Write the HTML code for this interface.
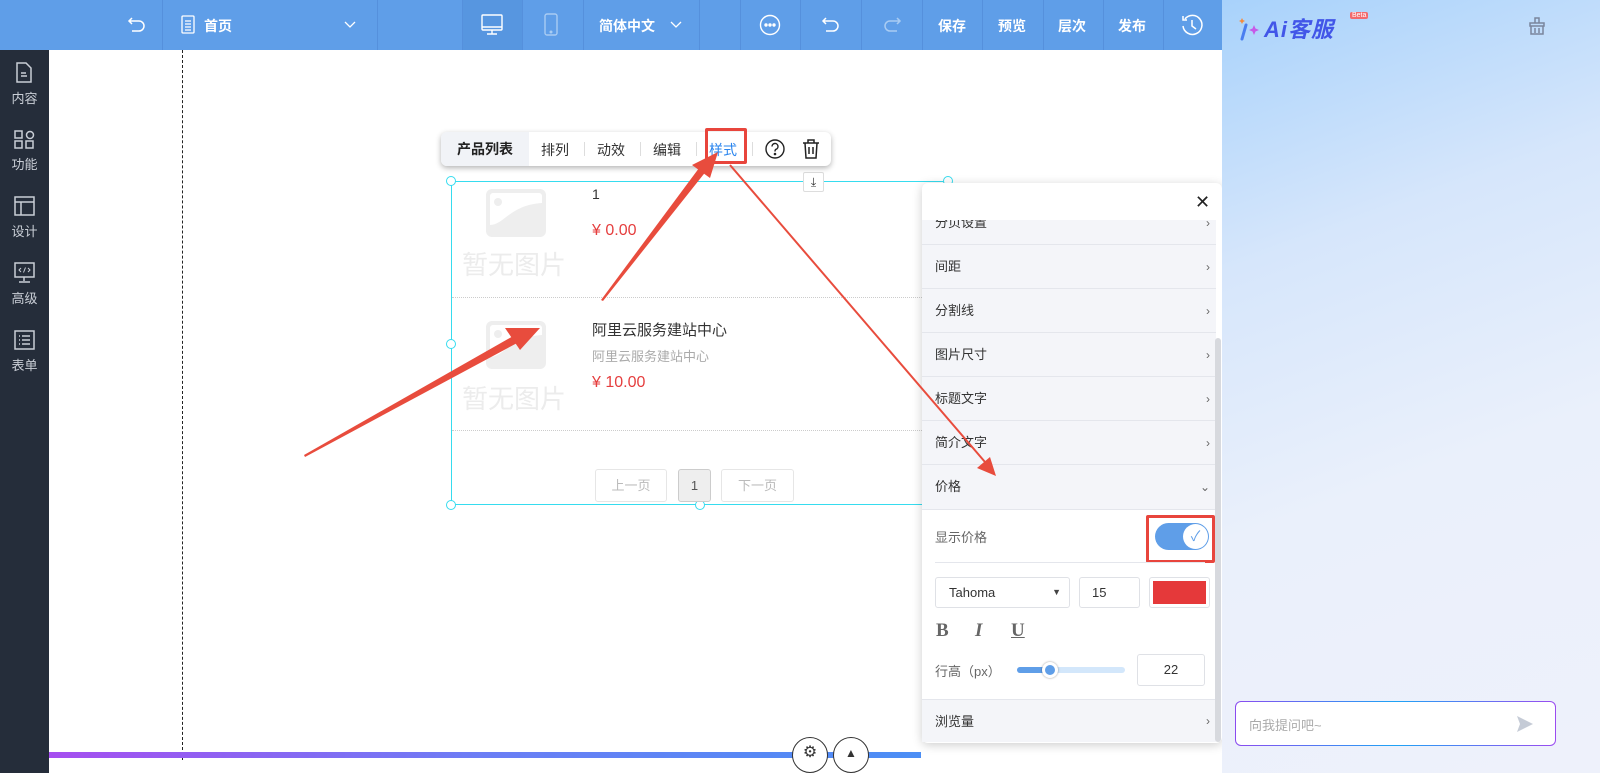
<!DOCTYPE html>
<html><head><meta charset="utf-8"><style>
*{margin:0;padding:0;box-sizing:border-box}
body{width:1600px;height:773px;overflow:hidden;position:relative;background:#fff;font-family:"Liberation Sans","Noto Sans CJK SC",sans-serif;font-size:14px;color:#333}
.abs{position:absolute}
#hdr{left:0;top:0;width:1222px;height:50px;background:#5f9ee8;color:#fff}
.dv{position:absolute;top:0;width:1px;height:50px;background:#5590dc}
.ht{position:absolute;top:16px;font-size:14px;font-weight:bold;color:#fff}
#side{left:0;top:50px;width:49px;height:723px;background:#252d3a}
.si{position:absolute;left:0;width:49px;text-align:center;color:#c9ced6;font-size:13px}
#ai{left:1222px;top:0;width:378px;height:773px;background:linear-gradient(160deg,#a8d2fb 0%,#d6e6fb 30%,#eaf0fb 60%,#eef1fb 100%)}
.row{position:absolute;left:922px;width:294px;height:44px;background:#f4f5f9;border-bottom:1px solid #e4e6ec;font-size:13px;color:#333;padding-left:13px;line-height:44px}
.row .ch{position:absolute;right:6px;top:0;color:#666;font-size:12px}
</style></head><body>
<div id="hdr" class="abs">
 <div class="abs" style="left:462px;top:0;width:60px;height:50px;background:#5796e0"></div>
 <div class="dv" style="left:162px"></div><div class="dv" style="left:377px"></div><div class="dv" style="left:462px"></div><div class="dv" style="left:522px"></div><div class="dv" style="left:583px"></div><div class="dv" style="left:699px"></div><div class="dv" style="left:740px"></div><div class="dv" style="left:800px"></div><div class="dv" style="left:861px"></div><div class="dv" style="left:922px"></div><div class="dv" style="left:982px"></div><div class="dv" style="left:1043px"></div><div class="dv" style="left:1103px"></div><div class="dv" style="left:1163px"></div>
 <svg class="abs" style="left:126px;top:14px" width="22" height="22" viewBox="0 0 22 22" fill="none" stroke="#fff" stroke-width="1.5"><path d="M6 4 L3 7 L6 10 M3 7 H13 a5 5 0 0 1 0 10 H6"/></svg>
 <svg class="abs" style="left:180px;top:15px" width="16" height="20" viewBox="0 0 16 20" fill="none" stroke="#fff" stroke-width="1.3"><rect x="2" y="1" width="12" height="17" rx="1"/><path d="M5 6h6M5 9h6M5 12h6M5 15h6"/></svg>
 <div class="ht" style="left:204px">首页</div>
 <svg class="abs" style="left:344px;top:20px" width="12" height="10"><path d="M1 2 L6 7 L11 2" fill="none" stroke="#fff" stroke-width="1.3"/></svg>
 <svg class="abs" style="left:480px;top:14px" width="24" height="22" fill="none" stroke="#fff" stroke-width="1.4"><rect x="2" y="1" width="20" height="15" rx="1"/><path d="M2 13h20M12 16v4M7 20h10"/></svg>
 <svg class="abs" style="left:543px;top:13px" width="16" height="24" fill="none" stroke="#a9ccf3" stroke-width="1.4"><rect x="2" y="1" width="12" height="21" rx="2"/><circle cx="8" cy="19" r=".8"/></svg>
 <div class="ht" style="left:599px">简体中文</div>
 <svg class="abs" style="left:670px;top:20px" width="12" height="10"><path d="M1 2 L6 7 L11 2" fill="none" stroke="#fff" stroke-width="1.3"/></svg>
 <svg class="abs" style="left:759px;top:14px" width="22" height="22" fill="none" stroke="#fff" stroke-width="1.4"><circle cx="11" cy="11" r="9.5"/><circle cx="7" cy="11" r="1" fill="#fff"/><circle cx="11" cy="11" r="1" fill="#fff"/><circle cx="15" cy="11" r="1" fill="#fff"/></svg>
 <svg class="abs" style="left:820px;top:14px" width="22" height="22" fill="none" stroke="#fff" stroke-width="1.5"><path d="M6 4 L3 7 L6 10 M3 7 H13 a5 5 0 0 1 0 10 H6"/></svg>
 <svg class="abs" style="left:881px;top:14px" width="22" height="22" fill="none" stroke="#a9ccf3" stroke-width="1.5"><path d="M16 4 L19 7 L16 10 M19 7 H9 a5 5 0 0 0 0 10 H16"/></svg>
 <div class="ht" style="left:938px">保存</div><div class="ht" style="left:998px">预览</div><div class="ht" style="left:1058px">层次</div><div class="ht" style="left:1118px">发布</div>
 <svg class="abs" style="left:1180px;top:13px" width="24" height="24" fill="none" stroke="#fff" stroke-width="1.5"><path d="M5 6 A9.5 9.5 0 1 1 3 13"/><path d="M3 3v4h4"/><path d="M12 7v6l4 3"/></svg>
</div>
<div id="side" class="abs">
 <svg class="abs" style="left:15px;top:12px" width="18" height="22" fill="none" stroke="#c9ced6" stroke-width="1.5"><path d="M2 1h9l5 5v14H2z"/><path d="M6 11h5M6 14h6"/></svg>
 <div class="si" style="top:38px">内容</div>
 <svg class="abs" style="left:14px;top:80px" width="22" height="20" fill="none" stroke="#c9ced6" stroke-width="1.5"><rect x="1" y="1" width="7" height="7"/><circle cx="16" cy="5" r="3.5"/><rect x="1" y="11" width="7" height="7"/><rect x="12" y="11" width="7" height="7"/></svg>
 <div class="si" style="top:104px">功能</div>
 <svg class="abs" style="left:14px;top:146px" width="22" height="20" fill="none" stroke="#c9ced6" stroke-width="1.5"><rect x="1" y="1" width="19" height="18"/><path d="M1 6h19M7 6v13"/></svg>
 <div class="si" style="top:171px">设计</div>
 <svg class="abs" style="left:14px;top:212px" width="22" height="22" fill="none" stroke="#c9ced6" stroke-width="1.5"><rect x="1" y="1" width="19" height="14"/><path d="M10 15v4M5 20h11"/><path d="M7 6l-2 2 2 2M14 6l2 2-2 2M11.5 5.5l-2 5" stroke-width="1"/></svg>
 <div class="si" style="top:238px">高级</div>
 <svg class="abs" style="left:14px;top:280px" width="22" height="20" fill="none" stroke="#c9ced6" stroke-width="1.5"><rect x="1" y="1" width="19" height="18"/><path d="M5 6h1M8 6h8M5 10h1M8 10h8M5 14h1M8 14h8"/></svg>
 <div class="si" style="top:305px">表单</div>
</div>
<div class="abs" style="left:182px;top:50px;height:710px;border-left:1px dashed #222"></div>
<!-- widget -->
<div class="abs" style="left:451px;top:181px;width:497px;height:324px;border:1px solid #36dcef"></div>
<div class="abs" style="left:452px;top:297px;width:470px;border-top:1px dotted #ccc"></div>
<div class="abs" style="left:452px;top:430px;width:470px;border-top:1px dotted #ccc"></div>
<div class="abs" style="left:446px;top:176px;width:10px;height:10px;border:1px solid #36dcef;border-radius:50%;background:#fff"></div>
<div class="abs" style="left:446px;top:339px;width:10px;height:10px;border:1px solid #36dcef;border-radius:50%;background:#fff"></div>
<div class="abs" style="left:446px;top:500px;width:10px;height:10px;border:1px solid #36dcef;border-radius:50%;background:#fff"></div>
<div class="abs" style="left:695px;top:500px;width:10px;height:10px;border:1px solid #36dcef;border-radius:50%;background:#fff"></div>
<div class="abs" style="left:943px;top:176px;width:10px;height:10px;border:1px solid #36dcef;border-radius:50%;background:#fff"></div>
<svg class="abs" style="left:486px;top:189px" width="60" height="48"><rect x="0" y="0" width="60" height="48" rx="6" fill="#eee"/><rect x="4" y="4" width="52" height="40" rx="3" fill="#fff"/><circle cx="12" cy="13" r="4" fill="#eee"/><path d="M4 36 C18 36 24 16 56 14 V44 H4z" fill="#eee"/></svg>
<div class="abs" style="left:462px;top:245px;font-size:26px;color:#ececec">暂无图片</div>
<svg class="abs" style="left:486px;top:321px" width="60" height="48"><rect x="0" y="0" width="60" height="48" rx="6" fill="#eee"/><rect x="4" y="4" width="52" height="40" rx="3" fill="#fff"/><circle cx="12" cy="13" r="4" fill="#eee"/><path d="M4 36 C18 36 24 16 56 14 V44 H4z" fill="#eee"/></svg>
<div class="abs" style="left:462px;top:379px;font-size:26px;color:#ececec">暂无图片</div>
<div class="abs" style="left:592px;top:186px;font-size:14px;color:#333">1</div>
<div class="abs" style="left:592px;top:222px;font-size:16px;color:#e53e3e">¥ 0.00</div>
<div class="abs" style="left:592px;top:319px;font-size:15px;color:#333">阿里云服务建站中心</div>
<div class="abs" style="left:592px;top:346px;font-size:13px;color:#aaa">阿里云服务建站中心</div>
<div class="abs" style="left:592px;top:374px;font-size:16px;color:#e53e3e">¥ 10.00</div>
<div class="abs" style="left:595px;top:469px;width:72px;height:33px;border:1px solid #e6e6e6;border-radius:3px;color:#bbb;font-size:13px;text-align:center;line-height:31px">上一页</div>
<div class="abs" style="left:678px;top:469px;width:33px;height:33px;border:1px solid #ccc;background:#eee;border-radius:3px;color:#555;font-size:13px;text-align:center;line-height:31px">1</div>
<div class="abs" style="left:721px;top:469px;width:73px;height:33px;border:1px solid #e6e6e6;border-radius:3px;color:#bbb;font-size:13px;text-align:center;line-height:31px">下一页</div>
<div class="abs" style="left:803px;top:172px;width:21px;height:20px;border:1px solid #ddd;background:#fff;border-radius:2px;font-size:12px;text-align:center;line-height:18px">⤓</div>
<!-- toolbar -->
<div class="abs" style="left:441px;top:132px;width:390px;height:34px;background:#fff;border-radius:6px;box-shadow:0 2px 6px rgba(0,0,0,.3);font-size:14px">
 <div class="abs" style="left:0;top:0;width:88px;height:34px;background:#f1f3f7;border-radius:6px 0 0 6px;font-weight:bold;line-height:34px;text-align:center;color:#222">产品列表</div>
 <div class="abs" style="left:100px;top:8px">排列</div><div class="abs" style="left:156px;top:8px">动效</div><div class="abs" style="left:212px;top:8px">编辑</div><div class="abs" style="left:268px;top:8px;color:#2a85ee">样式</div>
 <div class="abs" style="left:143px;top:10px;height:14px;border-left:1px solid #ddd"></div><div class="abs" style="left:199px;top:10px;height:14px;border-left:1px solid #ddd"></div><div class="abs" style="left:255px;top:10px;height:14px;border-left:1px solid #ddd"></div><div class="abs" style="left:311px;top:10px;height:14px;border-left:1px solid #ddd"></div>
 <svg class="abs" style="left:323px;top:6px" width="22" height="22" fill="none" stroke="#222" stroke-width="1.4"><circle cx="11" cy="11" r="9"/><path d="M8 8.5a3 3 0 1 1 4 2.8c-1 .4-1 1-1 2.2"/><circle cx="11" cy="16" r=".6" fill="#222"/></svg>
 <svg class="abs" style="left:360px;top:6px" width="20" height="22" fill="none" stroke="#222" stroke-width="1.5"><path d="M2 5h16M7 5V2h6v3M4 5l1 15h10l1-15M8 9v7M12 9v7"/></svg>
</div>
<div class="abs" style="left:705px;top:128px;width:42px;height:36px;border:3px solid #e8453c;border-radius:2px"></div>
<!-- bottom bar -->
<div class="abs" style="left:49px;top:752px;width:872px;height:6px;background:linear-gradient(90deg,#a64ef0,#6b7ef5,#4b8ef5)"></div>
<div class="abs" style="left:792px;top:737px;width:36px;height:36px;border:1px solid #333;border-radius:50%;background:#fff;text-align:center;font-size:16px;line-height:30px">⚙</div>
<div class="abs" style="left:833px;top:737px;width:36px;height:36px;border:1px solid #333;border-radius:50%;background:#fff;text-align:center;font-size:12px;line-height:30px">▲</div>
<!-- panel -->
<div class="abs" style="left:922px;top:183px;width:300px;height:560px;background:#fff;border-radius:6px;box-shadow:0 2px 10px rgba(0,0,0,.2)"></div>
<div class="abs" style="left:1195px;top:192px;font-size:18px;color:#222">✕</div>
<div class="row" style="top:220px;height:25px;line-height:6px;overflow:hidden">分页设置<span class="ch" style="line-height:6px">›</span></div>
<div class="row" style="top:245px">间距<span class="ch">›</span></div>
<div class="row" style="top:289px">分割线<span class="ch">›</span></div>
<div class="row" style="top:333px">图片尺寸<span class="ch">›</span></div>
<div class="row" style="top:377px">标题文字<span class="ch">›</span></div>
<div class="row" style="top:421px">简介文字<span class="ch">›</span></div>
<div class="row" style="top:465px;height:45px">价格<span class="ch">⌄</span></div>
<div class="abs" style="left:935px;top:527px;font-size:13px;color:#666">显示价格</div>
<div class="abs" style="left:1146px;top:515px;width:69px;height:48px;border:3px solid #e8453c;border-radius:2px"></div>
<div class="abs" style="left:1155px;top:523px;width:54px;height:27px;background:#5f9ee8;border-radius:14px"></div>
<div class="abs" style="left:1183px;top:524px;width:25px;height:25px;background:#fff;border-radius:50%;color:#5f9ee8;text-align:center;line-height:25px;font-size:14px">✓</div>
<div class="abs" style="left:935px;top:562px;width:270px;border-top:1px solid #e4e6ec"></div>
<div class="abs" style="left:935px;top:577px;width:135px;height:31px;border:1px solid #dfe1e6;border-radius:3px;font-size:13px;padding-left:13px;line-height:29px">Tahoma<span style="position:absolute;right:8px;font-size:9px;color:#444">▼</span></div>
<div class="abs" style="left:1079px;top:577px;width:61px;height:31px;border:1px solid #dfe1e6;border-radius:3px;font-size:13px;padding-left:12px;line-height:29px">15</div>
<div class="abs" style="left:1149px;top:577px;width:61px;height:31px;border:1px solid #dfe1e6;border-radius:3px;padding:3px"><div style="background:#e5393a;width:100%;height:100%"></div></div>
<div class="abs" style="left:936px;top:620px;font-family:'Liberation Serif',serif;font-weight:bold;font-size:19px;color:#666">B</div>
<div class="abs" style="left:975px;top:620px;font-family:'Liberation Serif',serif;font-weight:bold;font-style:italic;font-size:19px;color:#666">I</div>
<div class="abs" style="left:1011px;top:620px;font-family:'Liberation Serif',serif;font-weight:bold;text-decoration:underline;font-size:19px;color:#666">U</div>
<div class="abs" style="left:935px;top:661px;font-size:13px;color:#666">行高（px）</div>
<div class="abs" style="left:1017px;top:667px;width:108px;height:6px;background:#d3e7fb;border-radius:3px"></div>
<div class="abs" style="left:1017px;top:667px;width:33px;height:6px;background:#5f9ee8;border-radius:3px"></div>
<div class="abs" style="left:1042px;top:662px;width:16px;height:16px;background:#5f9ee8;border:3px solid #fff;border-radius:50%;box-shadow:0 0 2px rgba(0,0,0,.4)"></div>
<div class="abs" style="left:1137px;top:654px;width:68px;height:32px;border:1px solid #dfe1e6;border-radius:3px;font-size:13px;text-align:center;line-height:30px">22</div>
<div class="row" style="top:699px;height:43px;border-top:1px solid #e4e6ec;border-bottom:none;line-height:43px">浏览量<span class="ch">›</span></div>
<div class="abs" style="left:1215px;top:338px;width:6px;height:404px;background:#d7d9de;border-radius:3px"></div>
<!-- arrows -->
<svg class="abs" style="left:0;top:0" width="1600" height="773">
 <g fill="#e84c3d" stroke="none">
  <polygon points="305,457 304,455 515,335 519,342"/>
  <polygon points="540,328 505,328 520,350"/>
  <polygon points="601,300 603,301 711,165 705,160"/>
  <polygon points="718,152 692,165 710,178"/>
 </g>
 <line x1="730" y1="165" x2="985" y2="462" stroke="#e84c3d" stroke-width="2"/>
 <polygon points="996,476 977,468 990,457" fill="#e84c3d"/>
</svg>
<!-- AI panel -->
<div id="ai" class="abs">
 <svg class="abs" style="left:15px;top:15px" width="24" height="26"><path d="M5 3l1 2 2 1-2 1-1 2-1-2-2-1 2-1z" fill="#f58b3c"/><path d="M9 10l-4 14" stroke="#4a7ef0" stroke-width="3" stroke-linecap="round"/><path d="M17 10l1.5 3.5 3.5 1.5-3.5 1.5-1.5 3.5-1.5-3.5-3.5-1.5 3.5-1.5z" fill="#c65ae8"/></svg>
 <div class="abs" style="left:42px;top:12px;font-size:22px;font-weight:bold;font-style:italic;color:#4256e8;letter-spacing:1px">Ai客服</div>
 <div class="abs" style="left:128px;top:12px;background:#f2696c;color:#fff;font-size:7px;padding:0 2px;border-radius:2px">Beta</div>
 <svg class="abs" style="left:306px;top:17px" width="18" height="18" fill="none" stroke="#7a859c" stroke-width="1.5"><path d="M7 1h4v5H7zM2 6h14v3H2zM3 9v8h12V9M7 11v5M11 11v5"/></svg>
 <div class="abs" style="left:13px;top:701px;width:321px;height:45px;border-radius:6px;background:linear-gradient(90deg,#8a4bf0,#1ea3f5,#9b4bf0);padding:1px"><div style="width:100%;height:100%;background:#fff;border-radius:5px;font-size:13px;color:#aaa;padding:13px 0 0 13px">向我提问吧~</div></div>
 <svg class="abs" style="left:293px;top:714px" width="20" height="20"><path d="M2 2L18 10L2 18L5 10z" fill="#c5cbd6"/></svg>
</div>
</body></html>
